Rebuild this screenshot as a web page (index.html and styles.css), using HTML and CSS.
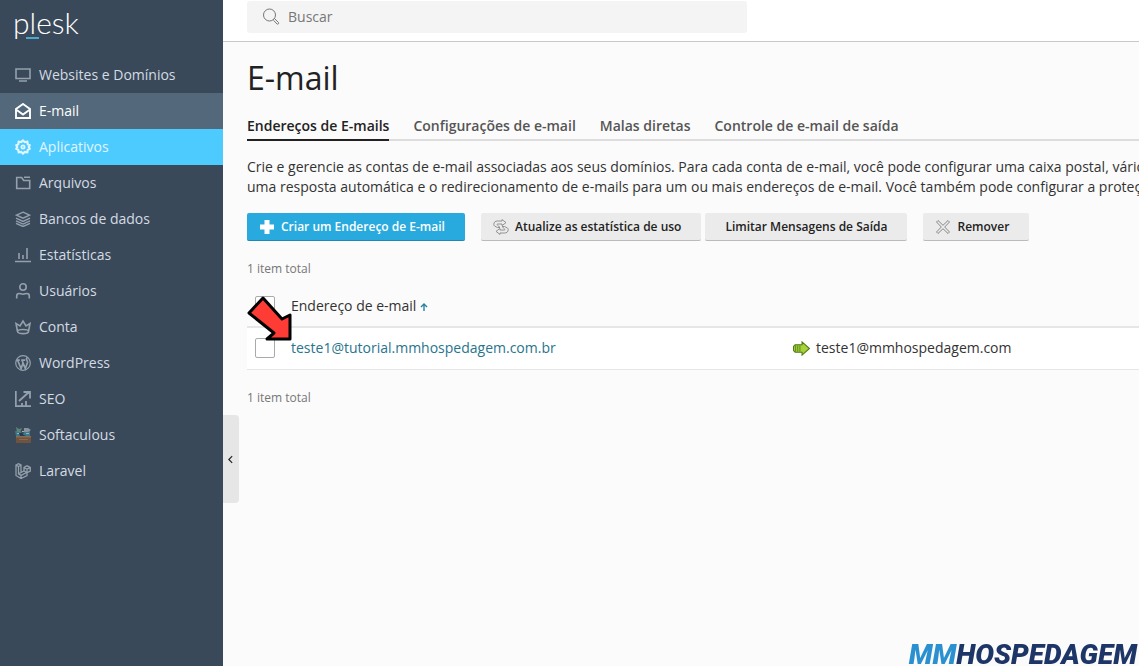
FILE: index.html
```html
<!DOCTYPE html>
<html lang="pt-BR">

<head>
    <meta charset="UTF-8">
    <meta name="viewport" content="width=device-width, initial-scale=1">
    <title>E-mail - Plesk</title>
    <link rel="stylesheet" href="styles.css">
</head>

<body>
    <aside class="sidebar">
        <a class="logo" href="#">plesk</a>
        <nav class="nav">
            <a class="nav-item" href="#">
                <svg class="icon" viewBox="0 0 16 16"><path d="M1 2h14v9.500H1zM4 14h8" /></svg>
                Websites e Domínios
            </a>
            <a class="nav-item active" href="#">
                <svg class="icon" viewBox="0 0 16 16"><path d="M1 6v9h14V6L8 1zM1 6.500l7 5 7-5" stroke-width="1.900" /></svg>
                E-mail
            </a>
            <a class="nav-item hover" href="#">
                <svg class="icon" viewBox="0 0 16 16"><path d="M8 1.500l1.800 1.600 2.500-.4.500 2.500 1.900 1L13.800 8l.9 1.800-1.900 1-.5 2.500-2.500-.4L8 14.500l-1.800-1.600-2.500.4-.5-2.500-1.900-1L2.200 8l-.9-1.800 1.900-1 .5-2.500 2.500.4z" stroke-width="2.200" /><circle cx="8" cy="8" r="1.600" stroke-width="1.800" /></svg>
                Aplicativos
            </a>
            <a class="nav-item" href="#">
                <svg class="icon" viewBox="0 0 16 16"><path d="M1.700 13.500v-11h5l2 3h6v8zM9 2.200h6" /></svg>
                Arquivos
            </a>
            <a class="nav-item" href="#">
                <svg class="icon" viewBox="0 0 16 16"><path d="M8 1.200l6.500 3L8 7.200l-6.500-3zM1 7.200l7 3.300 7-3.300M1 9.800l7 3.300 7-3.300M1 12.300l7 3.200 7-3.200" stroke-width="1.400" /></svg>
                Bancos de dados
            </a>
            <a class="nav-item" href="#">
                <svg class="icon" viewBox="0 0 16 16"><path d="M0 14.500h16M4 6v6M8 8v4M12 1v11" /></svg>
                Estatísticas
            </a>
            <a class="nav-item" href="#">
                <svg class="icon" viewBox="0 0 16 16"><circle cx="8" cy="4" r="3.200" /><path d="M1.700 15.500V13c0-1.500 1-2.500 2.500-2.500 1.500 0 2 .8 3.800.8s2.300-.8 3.800-.8 2.500 1 2.500 2.500v2.500" /></svg>
                Usuários
            </a>
            <a class="nav-item" href="#">
                <svg class="icon" viewBox="0 0 16 16"><path d="M2.500 12.500L1 4.500l4 2.500 3-5 3 5 4-2.500-1.500 8c0 2.800-11 2.800-11 0 0-2.700 11-2.700 11 0" /></svg>
                Conta
            </a>
            <a class="nav-item" href="#">
                <svg class="icon" viewBox="0 0 16 16"><circle cx="8" cy="8" r="7.300" stroke-width="1.200" /><path d="M1.500 5.200h3.300M6.200 5.200h4M2.600 5.200l3.500 8.500L8 8M7 5.200l3.300 8.300 2.200-6c.4-1.500-1.300-2.200-1-3.700.1-.8.7-1.300 1.500-1" stroke-width="1.700" /></svg>
                WordPress
            </a>
            <a class="nav-item" href="#">
                <svg class="icon" viewBox="0 0 16 16"><path d="M.8 0v15.200H16M4 10l10-9M8.500 1H15v6.500M7 15v-3M11 15v-5" stroke-width="1.800" /></svg>
                SEO
            </a>
            <a class="nav-item" href="#">
                <svg class="icon softaculous" viewBox="0 0 16 16">
                    <path fill="#70533e" d="M1 9h15v7H1z" />
                    <path fill="#8a6a4f" d="M1 9h15v1.500H1zM4 12h9v1H4z" />
                    <path fill="#38798d" d="M0 4h6l1 5H1zM9 4h6v5H8z" />
                    <path fill="#5c8577" d="M1 0l3 2 3-1-2 4H2z" />
                    <path fill="#8794a0" d="M9 1h4l3 2-3 2H9z" />
                    <path fill="#29394a" d="M4 6h3l1 2h3l-2 1H5z" />
                    <path fill="#a9aba4" d="M2 6h2v1H2zM7 4h2v1H7zM11 6h3v1h-3z" />
                </svg>
                Softaculous
            </a>
            <a class="nav-item" href="#">
                <svg class="icon" viewBox="0 0 16 16"><path d="M1 2l2.500-1.300L6 2v7.500l3-1.700V4.500l3-1.700 3.300 1.700V8L12 9.700v3L6 15.500l-5-3zM1 2l2.500 1.500L6 2M3.500 3.500v7.300L6 12.400l6-3.200M6 12.400v3M9 4.500l3 1.700 3.300-1.700M12 6.200v3.500M9 7.800l3 1.900M3.500 10.800L6 9.500" stroke-width="1.300" /></svg>
                Laravel
            </a>
        </nav>
        <button class="collapse" type="button" aria-label="Recolher menu">
            <svg viewBox="0 0 6 10"><path d="M5 1L1 5l4 4" /></svg>
        </button>
    </aside>

    <div class="page">
        <header class="topbar">
            <label class="search">
                <svg viewBox="0 0 18 18"><circle cx="7.500" cy="7" r="6" /><path d="M11.500 11.500l1-1 4 4c.8.8-.7 2.300-1.500 1.500l-3.500-3.700" /></svg>
                <input type="text" placeholder="Buscar" aria-label="Buscar">
            </label>
        </header>

        <main class="content">
            <h1>E-mail</h1>
            <nav class="tabs">
                <a class="tab current" href="#">Endereços de E-mails</a>
                <a class="tab" href="#">Configurações de e-mail</a>
                <a class="tab" href="#">Malas diretas</a>
                <a class="tab" href="#">Controle de e-mail de saída</a>
            </nav>

            <p class="description">
                Crie e gerencie as contas de e-mail associadas aos seus domínios. Para cada conta de e-mail, você pode configurar uma caixa postal, vários<br>
                uma resposta automática e o redirecionamento de e-mails para um ou mais endereços de e-mail. Você também pode configurar a proteção
            </p>

            <div class="toolbar">
                <button class="btn primary" type="button">
                    <svg viewBox="0 0 16 16"><path fill="#fff" stroke="none" d="M5.500 1h5v4.500H15v5h-4.500V15h-5v-4.500H1v-5h4.500z" /></svg>
                    Criar um Endereço de E-mail
                </button>
                <div class="btn-group">
                    <button class="btn" type="button">
                        <svg viewBox="0 0 16 16"><path d="M.8 5.500C.8 3 2.300 2 4.500 2H9V.6l4 3-4 3V5H5C4 5 3.800 5.500 4.500 6.200L7 8.500H4.500L1.500 7C1 6.600.8 6 .8 5.500zM15.200 10.500c0 2.500-1.500 3.500-3.700 3.500H7v1.400l-4-3 4-3V11h4c1 0 1.200-.5.500-1.200L9 7.500h2.500l3 1.500c.5.400.7 1 .7 1.500z" stroke-width=".9" /></svg>
                        Atualize as estatística de uso
                    </button>
                    <button class="btn" type="button">Limitar Mensagens de Saída</button>
                </div>
                <button class="btn" type="button">
                    <svg viewBox="0 0 16 16"><path d="M1.500 3L3 1.500l5 4.800 5-4.800L14.500 3 9.700 8l4.800 5-1.500 1.500-5-4.800-5 4.800L1.500 13l4.800-5z" /></svg>
                    Remover
                </button>
            </div>

            <div class="list">
                <p class="total">1 item total</p>
                <table>
                    <colgroup>
                        <col class="col-check">
                        <col class="col-address">
                        <col>
                    </colgroup>
                    <thead>
                        <tr>
                            <th><input type="checkbox" aria-label="Selecionar todos"></th>
                            <th>
                                <a class="sort" href="#">Endereço de e-mail
                                    <svg viewBox="0 0 8 8"><path d="M4 8V1M1 4l3-3 3 3" /></svg></a>
                            </th>
                            <th></th>
                        </tr>
                    </thead>
                    <tbody>
                        <tr>
                            <td><input type="checkbox" aria-label="Selecionar teste1"></td>
                            <td><a href="#">teste1@tutorial.mmhospedagem.com.br</a></td>
                            <td>
                                <span class="forward">
                                    <svg viewBox="0 0 16 14"><path fill="#a8d23a" stroke="#4f7a16" d="M8.500 3.500V.8l7 6.200-7 6.200v-2.700H2L.5 9V5L2 3.500z" /><path stroke="#4f7a16" stroke-width=".8" d="M2.500 4v6M4.500 4v6M6.500 4v6" /></svg>
                                    teste1@mmhospedagem.com
                                </span>
                            </td>
                        </tr>
                    </tbody>
                </table>
                <p class="total">1 item total</p>

                <!-- seta apontando para a conta -->
                <svg class="pointer" viewBox="0 0 46 46"><path d="M16 3l19 21 8-4v24H20l7-6L2 18z" /></svg>
            </div>
        </main>
    </div>

    <div class="brand"><span>MM</span>HOSPEDAGEM</div>
</body>

</html>
```

FILE: styles.css
```css
* {
    box-sizing: border-box;
}

body {
    display: flex;
    min-height: 100vh;
    margin: 0;
    font-family: "Open Sans", sans-serif;
    font-size: 14px;
    line-height: 20px;
    color: #333;
    background-color: #fbfbfb;
}

a {
    color: #27748d;
    text-decoration: none;
}

svg {
    fill: none;
    stroke: currentColor;
}

/* menu lateral */
.sidebar {
    position: relative;
    flex: none;
    width: 223px;
    color: #d3dbe3;
    background-color: #3a4959;
}

.logo {
    position: relative;
    display: block;
    height: 57px;
    padding: 4px 13px;
    font-family: Lato, sans-serif;
    font-size: 30px;
    font-weight: 300;
    line-height: 36px;
    color: #fff;
}

.logo::after {
    content: "";
    position: absolute;
    left: 26px;
    top: 37px;
    width: 13px;
    height: 2px;
    background-color: #4aa9cc;
}

.nav-item {
    display: flex;
    align-items: center;
    gap: 8px;
    height: 36px;
    padding: 0 15px;
    color: #d3dbe3;
}

.nav-item .icon {
    width: 16px;
    height: 16px;
    color: #94a0ac;
    stroke-width: 1.6;
}

.nav-item .softaculous {
    stroke: none;
}

.nav-item.active {
    background-color: #53687a;
}

.nav-item.hover {
    background-color: #4dcbff;
}

.nav-item.active,
.nav-item.active .icon {
    color: #fff;
}

.nav-item.hover,
.nav-item.hover .icon {
    color: #e0f6ff;
}

.collapse {
    position: absolute;
    left: 100%;
    top: 415px;
    width: 16px;
    height: 88px;
    padding: 0 5px;
    border: 0;
    border-radius: 0 4px 4px 0;
    color: #222;
    background-color: #e6e6e6;
}

.collapse svg {
    display: block;
    width: 5px;
    height: 9px;
    stroke-width: 1.4;
}

/* topo */
.page {
    flex: 1;
    min-width: 0;
    overflow: hidden;
}

.topbar {
    height: 42px;
    padding: 1px 24px;
    border-bottom: 1px solid #c8c8c8;
    background-color: #fff;
}

.search {
    display: flex;
    align-items: center;
    gap: 8px;
    max-width: 500px;
    height: 32px;
    padding: 0 15px;
    border-radius: 3px;
    background-color: #f4f4f4;
}

.search svg {
    flex: none;
    width: 18px;
    height: 18px;
    color: #777;
}

.search input {
    flex: 1;
    padding: 0;
    border: 0;
    outline: 0;
    font: inherit;
    background: none;
}

.search input::placeholder {
    color: #777;
}

/* conteúdo */
.content {
    padding: 16px 0 0 24px;
}

h1 {
    margin: 0 0 18px;
    font-size: 32px;
    font-weight: 400;
    line-height: 40px;
    color: #222;
}

.tabs {
    display: flex;
    gap: 24px;
    box-shadow: inset 0 -2px #ddd;
}

.tab {
    padding-bottom: 3px;
    border-bottom: 2px solid transparent;
    font-weight: 600;
    color: #555;
    white-space: nowrap;
}

.tab.current {
    border-color: #222;
    color: #222;
}

.description {
    margin: 16px 0;
    white-space: nowrap;
}

.toolbar {
    display: flex;
    gap: 16px;
}

.btn-group {
    display: flex;
    gap: 4px;
}

.btn {
    display: flex;
    align-items: center;
    gap: 6px;
    height: 28px;
    padding: 0 20px;
    border: 0;
    border-bottom: 1px solid #bbb;
    border-radius: 2px;
    font-family: inherit;
    font-size: 12px;
    font-weight: 600;
    color: #222;
    background-color: #ebebeb;
    white-space: nowrap;
}

.btn:has(svg) {
    padding-left: 12px;
}

.btn svg {
    width: 16px;
    height: 16px;
    color: #888;
}

.btn.primary {
    border-color: #2187b0;
    color: #fff;
    background-color: #28aade;
}

/* lista */
.list {
    position: relative;
    padding-top: 18px;
}

.total {
    margin: 0;
    font-size: 12px;
    color: #777;
}

table {
    width: 100%;
    margin: 5px 0 18px;
    border-collapse: separate;
    border-spacing: 0;
    table-layout: fixed;
}

.col-check {
    width: 36px;
}

.col-address {
    width: 502px;
}

th,
td {
    height: 42px;
    padding: 0 8px 1px;
    border-bottom: 1px solid #e6e6e6;
    font-weight: 400;
    text-align: left;
    white-space: nowrap;
}

th {
    height: 44px;
    padding: 1px 8px 0;
    border-bottom-width: 2px;
}

td {
    background-color: #fff;
}

input[type="checkbox"] {
    display: block;
    appearance: none;
    width: 20px;
    height: 20px;
    margin: 0;
    border: 1px solid #aaa;
    border-radius: 2px;
    background-color: #fff;
}

.sort {
    color: #333;
}

.sort svg {
    width: 8px;
    height: 8px;
    color: #27849f;
    stroke-width: 1.4;
}

.forward {
    display: flex;
    align-items: center;
    gap: 6px;
}

.forward svg {
    width: 17px;
    height: 15px;
}

.pointer {
    position: absolute;
    left: 0;
    top: 54px;
    width: 46px;
    height: 46px;
    fill: #ff3b35;
    stroke: #000;
    stroke-width: 3;
    stroke-linejoin: round;
}

.brand {
    position: fixed;
    right: 2px;
    bottom: 0;
    font-family: Roboto, sans-serif;
    font-size: 28px;
    font-style: italic;
    font-weight: 900;
    line-height: 22px;
    color: #1d3567;
}

.brand span {
    color: #2b90d0;
}
```
